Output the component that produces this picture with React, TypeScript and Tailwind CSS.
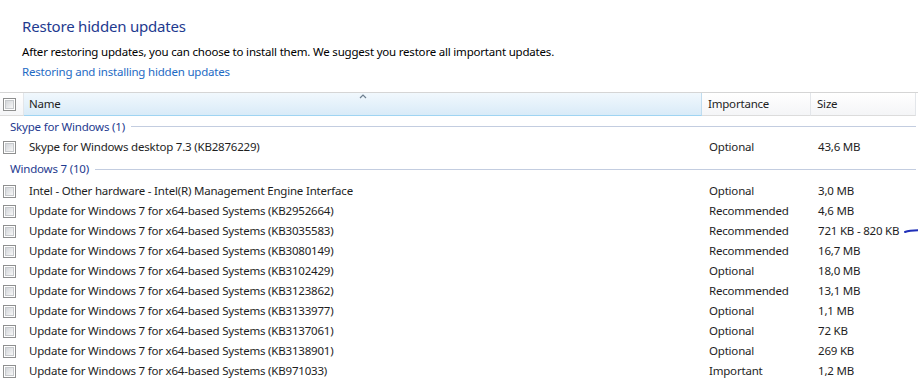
import React from "react";

const font = { fontFamily: '"Noto Sans", "Open Sans", sans-serif', letterSpacing: "-0.2px" };

function Check() {
  return (
    <div className="w-[13px] h-[13px] border border-[#8e8f8f] bg-white flex items-center justify-center">
      <div className="w-[9px] h-[9px] border border-[#c6c9cc] bg-gradient-to-br from-[#d3d6da] to-[#f7f7f7]" />
    </div>
  );
}

type Row = { name: string; imp: string; size: string; mark?: boolean };

const skype: Row[] = [
  { name: "Skype for Windows desktop 7.3 (KB2876229)", imp: "Optional", size: "43,6 MB" },
];

const win7: Row[] = [
  { name: "Intel - Other hardware - Intel(R) Management Engine Interface", imp: "Optional", size: "3,0 MB" },
  { name: "Update for Windows 7 for x64-based Systems (KB2952664)", imp: "Recommended", size: "4,6 MB" },
  { name: "Update for Windows 7 for x64-based Systems (KB3035583)", imp: "Recommended", size: "721 KB - 820 KB", mark: true },
  { name: "Update for Windows 7 for x64-based Systems (KB3080149)", imp: "Recommended", size: "16,7 MB" },
  { name: "Update for Windows 7 for x64-based Systems (KB3102429)", imp: "Optional", size: "18,0 MB" },
  { name: "Update for Windows 7 for x64-based Systems (KB3123862)", imp: "Recommended", size: "13,1 MB" },
  { name: "Update for Windows 7 for x64-based Systems (KB3133977)", imp: "Optional", size: "1,1 MB" },
  { name: "Update for Windows 7 for x64-based Systems (KB3137061)", imp: "Optional", size: "72 KB" },
  { name: "Update for Windows 7 for x64-based Systems (KB3138901)", imp: "Optional", size: "269 KB" },
  { name: "Update for Windows 7 for x64-based Systems (KB971033)", imp: "Important", size: "1,2 MB" },
];

function ItemRow({ r }: { r: Row }) {
  return (
    <div className="relative flex items-center h-[20px] text-[11.5px] text-[#1e1e1e]">
      <div className="w-[29px] pl-[3px] shrink-0 flex items-center">
        <Check />
      </div>
      <div className="w-[680px] shrink-0 whitespace-nowrap">{r.name}</div>
      <div className="w-[109px] shrink-0 whitespace-nowrap">{r.imp}</div>
      <div className="whitespace-nowrap">{r.size}</div>
      {r.mark && (
        <svg className="absolute left-[904px] top-[7px]" width="14" height="6" viewBox="0 0 14 6">
          <path d="M1 4 C4 2.8 8 2.3 14 2.3" stroke="#1f2fb8" strokeWidth="2" fill="none" strokeLinecap="round" />
        </svg>
      )}
    </div>
  );
}

function Group({ label, h }: { label: string; h: string }) {
  return (
    <div className={`flex items-center ${h} pl-[10px] pr-[2px] text-[11.5px] text-[#1e3a8f]`}>
      <span className="whitespace-nowrap">{label}</span>
      <div className="ml-[6px] flex-1 h-px bg-[#c3cde0]" />
    </div>
  );
}

export default function App() {
  return (
    <div className="w-[918px] h-[389px] bg-white overflow-hidden" style={font}>
      <div className="pl-[22px] pt-[15px]">
        <div className="text-[15px] leading-[22px] text-[#1e3a8f]">Restore hidden updates</div>
        <div className="mt-[6px] text-[11.5px] leading-[17px] text-black">
          After restoring updates, you can choose to install them. We suggest you restore all important updates.
        </div>
        <div className="mt-[3px] text-[11.5px] leading-[17px] text-[#1e6ac4]">Restoring and installing hidden updates</div>
      </div>

      <div className="mt-[12px] flex h-[24px] border-t border-[#d5d5d5] text-[11.5px] text-[#1e1e1e]">
        <div className="w-[24px] shrink-0 flex items-center pl-[3px] bg-gradient-to-b from-white to-[#f4f5f7] border-b border-[#dcdcdc] border-r border-r-[#e3e6ea]">
          <Check />
        </div>
        <div className="relative w-[678px] shrink-0 flex items-center pl-[5px] bg-gradient-to-b from-[#f1f8fd] to-[#d9ebf8] border-b border-[#9fd4f2] border-r border-r-[#c0dcef]">
          Name
          <svg className="absolute left-[335px] top-[1px]" width="8" height="5" viewBox="0 0 8 5">
            <path d="M1 4 L4 1 L7 4" stroke="#6e7f8f" strokeWidth="1.2" fill="none" />
          </svg>
        </div>
        <div className="w-[109px] shrink-0 flex items-center pl-[6px] bg-gradient-to-b from-white to-[#f4f5f7] border-b border-[#dcdcdc] border-r border-r-[#e3e6ea]">
          Importance
        </div>
        <div className="flex-1 flex items-center pl-[6px] bg-gradient-to-b from-white to-[#f4f5f7] border-b border-[#dcdcdc] border-r border-r-[#e3e6ea] mr-[2px]">
          Size
        </div>
      </div>

      <Group label="Skype for Windows (1)" h="h-[21px]" />
      {skype.map((r) => (
        <ItemRow key={r.name} r={r} />
      ))}
      <Group label="Windows 7 (10)" h="h-[24px]" />
      {win7.map((r) => (
        <ItemRow key={r.name} r={r} />
      ))}
    </div>
  );
}
